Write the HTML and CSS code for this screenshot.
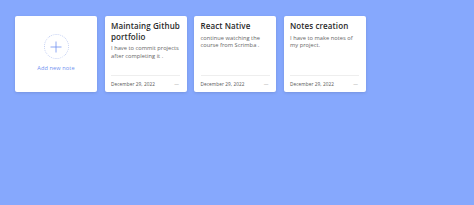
FILE: index.html
```html
<!DOCTYPE html>
<html lang="en">
<head>
  <meta charset="UTF-8">
  <title>Notes</title>
  <link rel="stylesheet" href="styles.css">
</head>
<body>

<div class="notes">
  <!-- Add note card -->
  <div class="note add-note">
    <div class="add-circle">
      <svg width="12" height="12" viewBox="0 0 12 12">
        <path d="M6 0.5V11.5M0.5 6H11.5" stroke="#6f8ff0" stroke-width="0.8" fill="none"/>
      </svg>
    </div>
    <span class="add-label">Add new note</span>
  </div>

  <div class="note">
    <h2>Maintaing Github portfolio</h2>
    <p>I have to commit projects after completing it .</p>
    <div class="note-footer">
      <span>December 29, 2022</span>
      <span class="more">—</span>
    </div>
  </div>

  <div class="note">
    <h2>React Native</h2>
    <p>continue watching the course from Scrimba .</p>
    <div class="note-footer">
      <span>December 29, 2022</span>
      <span class="more">—</span>
    </div>
  </div>

  <div class="note">
    <h2>Notes creation</h2>
    <p>I have to make notes of my project.</p>
    <div class="note-footer">
      <span>December 29, 2022</span>
      <span class="more">—</span>
    </div>
  </div>
</div>

</body>
</html>
```

FILE: styles.css
```css
body {
  margin: 0;
  font-family: "Open Sans", Arial, sans-serif;
  background-color: #86a8fd;
  height: 205px;
}

.notes {
  display: flex;
  gap: 7.5px;
  padding: 16px 15px;
}

.note {
  width: 82px;
  height: 76px;
  box-sizing: border-box;
  background-color: #fff;
  border-radius: 2px;
  box-shadow: 0 1px 3px rgba(0, 0, 0, 0.12);
  padding: 5px 6.5px 0;
  display: flex;
  flex-direction: column;
}

.note h2 {
  margin: 0;
  font-size: 8px;
  line-height: 10.5px;
  font-weight: 600;
  letter-spacing: 0.1px;
  color: #2a2a2a;
}

.note p {
  margin: 3px 0 0;
  font-size: 5.7px;
  line-height: 7.6px;
  letter-spacing: 0.03px;
  color: #666;
}

.note-footer {
  margin-top: auto;
  height: 16px;
  border-top: 1px solid #eee;
  display: flex;
  justify-content: space-between;
  align-items: center;
  font-size: 4.7px;
  letter-spacing: 0.1px;
  color: #555;
}

.note-footer .more {
  color: #aaa;
  margin-right: 1px;
}

.add-note {
  align-items: center;
  justify-content: flex-start;
  padding-top: 18px;
}

.add-circle {
  width: 23px;
  height: 23px;
  border: 1px dotted #c3cff3;
  border-radius: 50%;
  display: flex;
  align-items: center;
  justify-content: center;
}

.add-label {
  margin-top: 5px;
  font-size: 5.6px;
  letter-spacing: 0.1px;
  color: #6f8ff0;
}
```
